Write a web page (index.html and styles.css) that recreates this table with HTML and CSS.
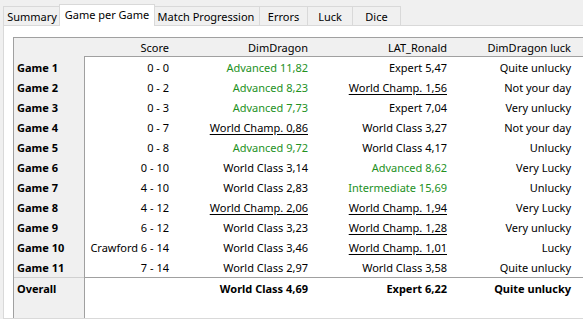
FILE: index.html
```html
<!DOCTYPE html>
<html>
<head>
<meta charset="utf-8">
<link rel="stylesheet" href="styles.css">
</head>
<body>
<div class="tabs">
  <div class="tab t-summary">Summary</div>
  <div class="tab active t-gpg">Game per Game</div>
  <div class="tab t-mp">Match Progression</div>
  <div class="tab t-err">Errors</div>
  <div class="tab t-luck">Luck</div>
  <div class="tab t-dice">Dice</div>
</div>
<div class="panel">
  <div class="grid">
    <div class="corner"></div>
    <div class="hdr">Score</div>
    <div class="hdr">DimDragon</div>
    <div class="hdr">LAT_Ronald</div>
    <div class="hdr">DimDragon luck</div>
    <div class="hdr"></div>

    <div class="lbl">Game 1</div><div class="c first">0 - 0</div><div class="c g">Advanced 11,82</div><div class="c">Expert 5,47</div><div class="c">Quite unlucky</div><div class="c"></div>
    <div class="lbl">Game 2</div><div class="c first">0 - 2</div><div class="c g">Advanced 8,23</div><div class="c"><span class="u">World Champ. 1,56</span></div><div class="c">Not your day</div><div class="c"></div>
    <div class="lbl">Game 3</div><div class="c first">0 - 3</div><div class="c g">Advanced 7,73</div><div class="c">Expert 7,04</div><div class="c">Very unlucky</div><div class="c"></div>
    <div class="lbl">Game 4</div><div class="c first">0 - 7</div><div class="c"><span class="u">World Champ. 0,86</span></div><div class="c">World Class 3,27</div><div class="c">Not your day</div><div class="c"></div>
    <div class="lbl">Game 5</div><div class="c first">0 - 8</div><div class="c g">Advanced 9,72</div><div class="c">World Class 4,17</div><div class="c">Unlucky</div><div class="c"></div>
    <div class="lbl">Game 6</div><div class="c first">0 - 10</div><div class="c">World Class 3,14</div><div class="c g">Advanced 8,62</div><div class="c">Very Lucky</div><div class="c"></div>
    <div class="lbl">Game 7</div><div class="c first">4 - 10</div><div class="c">World Class 2,83</div><div class="c g">Intermediate 15,69</div><div class="c">Unlucky</div><div class="c"></div>
    <div class="lbl">Game 8</div><div class="c first">4 - 12</div><div class="c"><span class="u">World Champ. 2,06</span></div><div class="c"><span class="u">World Champ. 1,94</span></div><div class="c">Very Lucky</div><div class="c"></div>
    <div class="lbl">Game 9</div><div class="c first">6 - 12</div><div class="c">World Class 3,23</div><div class="c"><span class="u">World Champ. 1,28</span></div><div class="c">Very unlucky</div><div class="c"></div>
    <div class="lbl">Game 10</div><div class="c first">Crawford 6 - 14</div><div class="c">World Class 3,46</div><div class="c"><span class="u">World Champ. 1,01</span></div><div class="c">Lucky</div><div class="c"></div>
    <div class="lbl">Game 11</div><div class="c first">7 - 14</div><div class="c">World Class 2,97</div><div class="c">World Class 3,58</div><div class="c">Quite unlucky</div><div class="c"></div>

    <div class="lbl tot">Overall</div><div class="c first tot"></div><div class="c tot">World Class 4,69</div><div class="c tot">Expert 6,22</div><div class="c tot">Quite unlucky</div><div class="c tot"></div>

    <div class="lbl fill"></div><div class="c first fill"></div><div class="c fill"></div><div class="c fill"></div><div class="c fill"></div><div class="c fill"></div>
  </div>
</div>
</body>
</html>
```
FILE: styles.css
```css
html, body {
  margin: 0;
  padding: 0;
  background: #f0f0f0;
  width: 583px;
  height: 319px;
  overflow: hidden;
  font-family: "Noto Sans", "Open Sans", sans-serif;
  font-size: 11px;
  color: #000;
}

.tabs {
  display: flex;
  align-items: flex-end;
  height: 26px;
  padding-left: 3px;
  position: relative;
  z-index: 2;
}

.tab {
  box-sizing: border-box;
  height: 19px;
  border: 1px solid #d9d9d9;
  border-bottom: none;
  border-left: none;
  background: #f0f0f0;
  display: flex;
  align-items: center;
  justify-content: center;
  line-height: 1;
  padding-top: 1px;
  margin-bottom: 1px;
}
.tab:first-child { border-left: 1px solid #d9d9d9; }

.tab.active {
  height: 22px;
  margin: 0 -2px 0 -2px;
  border-left: 1px solid #d9d9d9;
  background: #fff;
  padding-top: 0;
  padding-bottom: 3px;
  position: relative;
  z-index: 3;
}

.t-summary { width: 58px; }
.t-gpg { width: 96px; }
.t-mp { width: 107px; }
.t-err { width: 48px; }
.t-luck { width: 45px; }
.t-dice { width: 48px; }

.panel {
  box-sizing: border-box;
  margin-top: -1px;
  margin-left: 3px;
  border: 1px solid #d9d9d9;
  border-right: none;
  background: #fff;
  height: 294px;
  padding: 11px 0 0 9px;
  overflow: hidden;
}

.grid {
  display: grid;
  grid-template-columns: 70px 91px 139px 139px 124px 1fr;
  grid-template-rows: 19px repeat(11, 20px) 21px 40px;
  border: 1px solid #a0a0a0;
  border-right: none;
  background: #fff;
  white-space: nowrap;
}

.corner, .hdr {
  background: #f0f0f0;
}
.hdr {
  border-bottom: 1px solid #a0a0a0;
  text-align: right;
  padding-right: 6px;
  padding-top: 1px;
  line-height: 18px;
}
.corner { border-bottom: 1px solid #f0f0f0; }

.lbl {
  background: #f0f0f0;
  font-weight: bold;
  padding-left: 3px;
  padding-top: 1px;
  line-height: 19px;
}

.c {
  text-align: right;
  padding-right: 6px;
  padding-top: 1px;
  line-height: 19px;
}
.c.first {
  border-left: 1px solid #a0a0a0;
}

.g { color: #23911e; }
.u {
  text-decoration: underline;
  text-underline-offset: 2px;
}

.tot {
  border-top: 1px solid #a0a0a0;
  font-weight: bold;
}
.lbl.tot { border-top-color: #d0d0d0; }
```
